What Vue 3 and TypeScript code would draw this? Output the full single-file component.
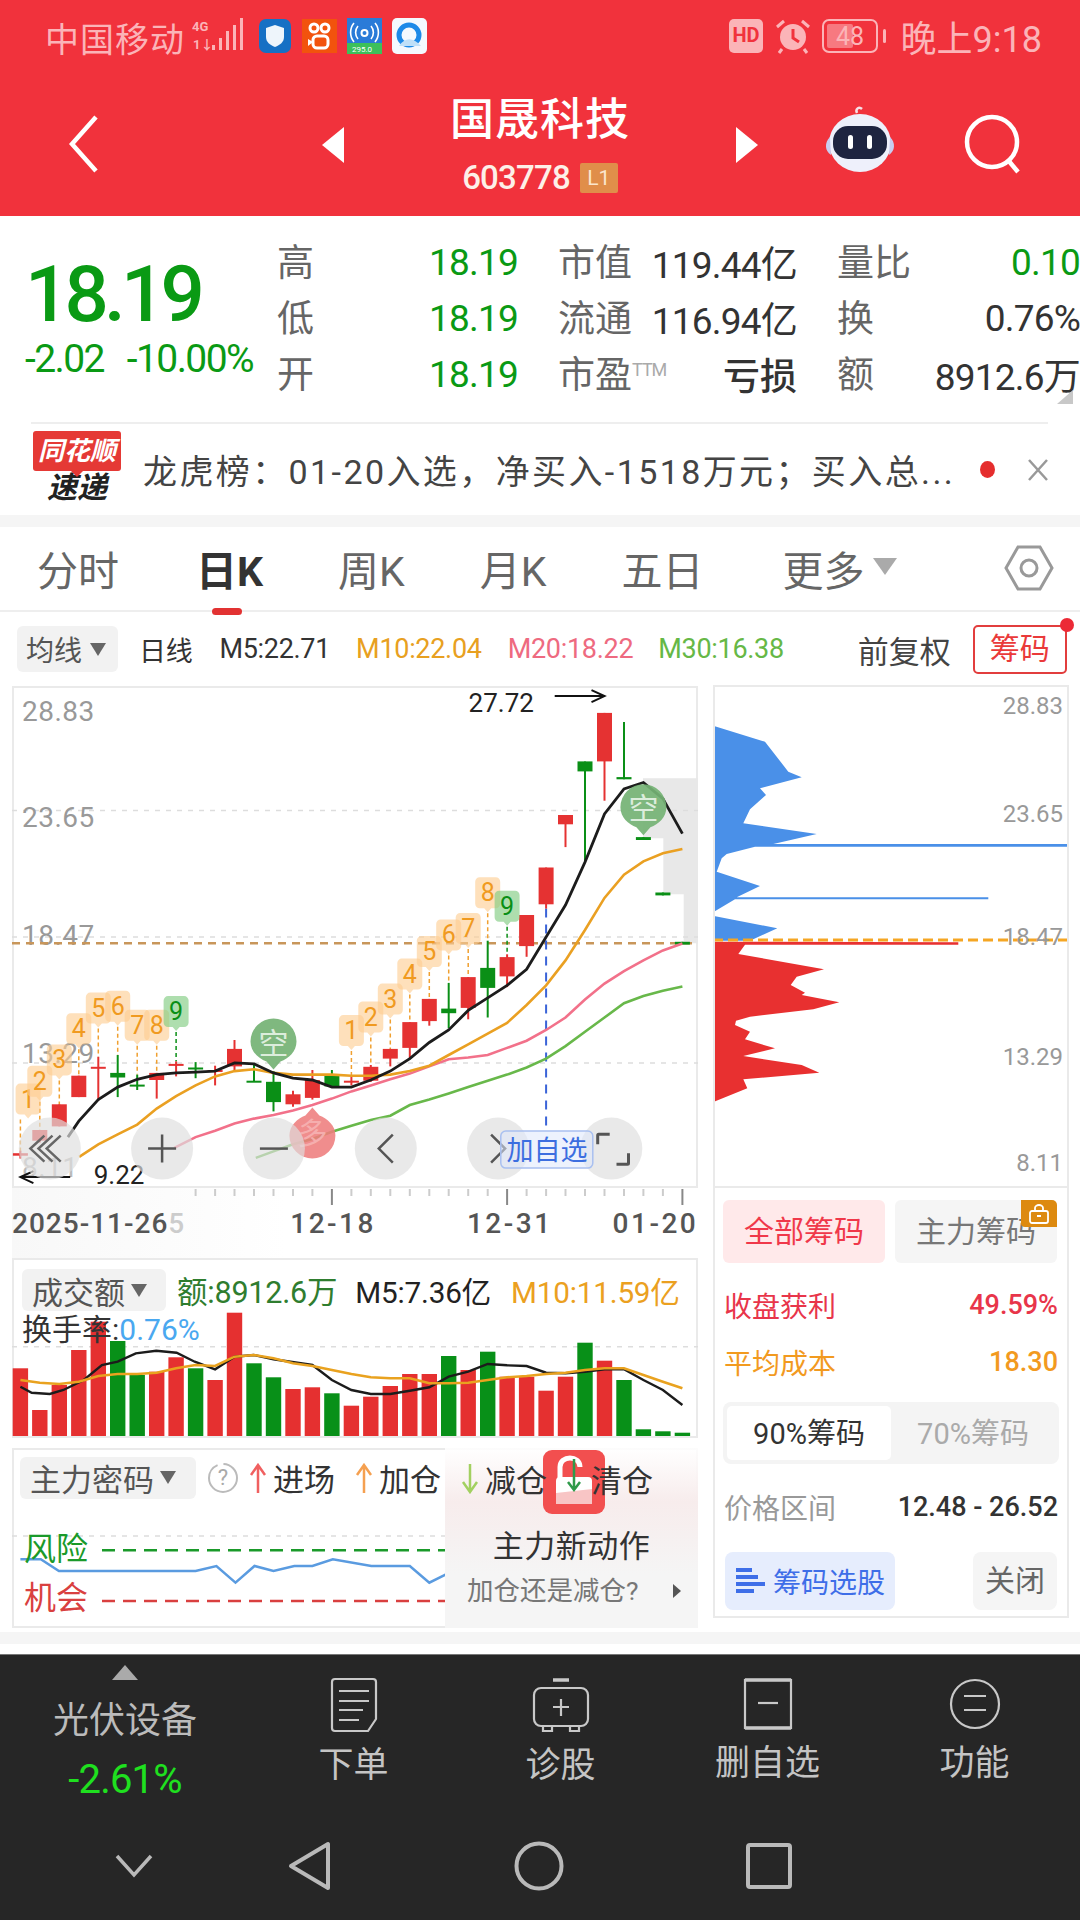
<template>
  <div class="page">
    <header class="top">
      <div class="status">
        <span class="carrier">中国移动</span>
        <svg class="net" width="52" height="36" viewBox="0 0 52 36">
          <text x="0" y="13" class="net-txt">4G</text>
          <text x="1" y="31" class="net-txt">1↓</text>
          <rect x="20" y="27" width="3" height="5" />
          <rect x="27" y="20" width="3" height="12" />
          <rect x="34" y="13" width="3" height="19" />
          <rect x="41" y="7" width="3" height="25" />
          <rect x="48" y="0" width="3" height="32" />
        </svg>
        <svg class="app a0" width="32" height="34" viewBox="0 0 32 34">
          <rect width="32" height="34" rx="7" fill="#1670c4" />
          <path d="M16 6l9 3v9c0 5-4 8-9 10-5-2-9-5-9-10V9z" fill="#eef5fb" />
        </svg>
        <svg class="app a1" width="35" height="34" viewBox="0 0 35 34">
          <rect width="35" height="34" fill="#f2530d" />
          <circle cx="12" cy="9" r="4" fill="none" stroke="#fff" stroke-width="3" />
          <circle cx="23" cy="9" r="4" fill="none" stroke="#fff" stroke-width="3" />
          <rect x="11" y="17" width="15" height="12" rx="4" fill="none" stroke="#fff" stroke-width="3" />
          <path d="M11 23l-5-3v7z" fill="#fff" />
        </svg>
        <svg class="app" width="35" height="36" viewBox="0 0 35 36">
          <rect width="35" height="36" fill="#2a7bd8" />
          <rect y="25" width="35" height="11" fill="#3cc05a" />
          <circle cx="17.500" cy="15" r="3" fill="none" stroke="#fff" stroke-width="2" />
          <path d="M11 8a10 10 0 0 0 0 13M24 8a10 10 0 0 1 0 13M7 5a15 15 0 0 0 0 19M28 5a15 15 0 0 1 0 19" fill="none" stroke="#fff" stroke-width="1.600" />
          <text x="5" y="34" class="tiny">295.0</text>
        </svg>
        <svg class="app" width="35" height="36" viewBox="0 0 35 36">
          <rect width="35" height="36" rx="5" fill="#f4f9fe" />
          <circle cx="17" cy="17" r="10" fill="none" stroke="#1d8ae8" stroke-width="5" />
          <path d="M7 28c6-9 14-9 22 0z" fill="#bfe0f8" />
        </svg>
        <span class="status-fill"></span>
        <svg class="sys" width="34" height="34" viewBox="0 0 34 34">
          <rect width="34" height="34" rx="5" fill="#fbb4b8" />
          <text x="17" y="23" text-anchor="middle" class="hd">HD</text>
        </svg>
        <svg class="sys alarm" width="38" height="36" viewBox="0 0 38 36">
          <circle cx="19" cy="19" r="13" fill="#fbb4b8" />
          <path d="M19 11v9l6 4" fill="none" stroke="#f1323c" stroke-width="3" />
          <path d="M3 9l7-6M35 9l-7-6M8 31l-3 4M30 31l3 4" stroke="#fbb4b8" stroke-width="3" fill="none" />
        </svg>
        <svg class="sys batt" width="66" height="34" viewBox="0 0 66 34">
          <rect x="1" y="1" width="54" height="32" rx="6" fill="none" stroke="#fbb4b8" stroke-width="2" />
          <rect x="5" y="5" width="26" height="24" rx="2" fill="#fbb4b8" fill-opacity=".55" />
          <text x="28" y="26" text-anchor="middle" class="batt-txt">48</text>
          <rect x="61" y="10" width="3" height="14" rx="1.500" fill="#fbb4b8" />
        </svg>
        <span class="clock">晚上9:18</span>
      </div>
      <div class="nav">
        <svg class="back" width="32" height="58" viewBox="0 0 32 58">
          <path d="M28 2L4 29l24 27" fill="none" stroke="#fff" stroke-width="4.500" />
        </svg>
        <svg class="tri-l" width="22" height="36" viewBox="0 0 22 36"><path d="M22 0v36L0 18z" fill="#fff" /></svg>
        <div class="stock">
          <div class="stock-name">国晟科技</div>
          <div class="stock-code">603778<span class="lv">L1</span></div>
        </div>
        <svg class="tri-r" width="22" height="36" viewBox="0 0 22 36"><path d="M0 0v36l22-18z" fill="#fff" /></svg>
        <svg class="robot" width="72" height="68" viewBox="0 0 72 68">
          <path d="M33 8c-2-4 2-7 5-4" fill="none" stroke="#f6dfe6" stroke-width="2.500" />
          <ellipse cx="36" cy="38" rx="31" ry="29" fill="#eef0fb" />
          <path d="M6 32c-6 6-5 14 1 18M66 32c6 6 5 14-1 18" fill="#c9cdf0" />
          <rect x="9" y="21" width="54" height="33" rx="15" fill="#1e2440" />
          <rect x="24" y="30" width="5" height="14" rx="2.500" fill="#fff" />
          <rect x="43" y="30" width="5" height="14" rx="2.500" fill="#fff" />
        </svg>
        <svg class="search" width="60" height="60" viewBox="0 0 60 60">
          <circle cx="28" cy="28" r="25" fill="none" stroke="#fff" stroke-width="4.500" />
          <path d="M44 46l10 12" stroke="#fff" stroke-width="4.500" fill="none" />
        </svg>
      </div>
    </header>

    <section class="quote">
      <div class="price-box">
        <div class="price">18.19</div>
        <div class="change"><span>-2.02</span><span>-10.00%</span></div>
      </div>
      <div class="qgrid">
        <template v-for="row in quoteRows" :key="row[0]">
          <span class="ql">{{ row[0] }}</span>
          <span class="qv green">{{ row[1] }}</span>
          <span class="ql pad" v-if="row[2] !== '市盈'">{{ row[2] }}</span>
          <span class="ql pad" v-else>市盈<sup class="ttm">TTM</sup></span>
          <span class="qv" :class="{ bold: row[3] === '亏损' }">{{ row[3] }}</span>
          <span class="ql pad">{{ row[4] }}</span>
          <span class="qv" :class="{ green: row[4] === '量比' }">{{ row[5] }}</span>
        </template>
      </div>
      <i class="corner"></i>
    </section>

    <section class="news">
      <div class="news-logo">
        <div class="news-red">同花顺</div>
        <div class="news-black">速递</div>
      </div>
      <div class="news-text">龙虎榜：01-20入选，净买入-1518万元；买入总...</div>
      <i class="news-dot"></i>
      <svg class="news-x" width="24" height="24" viewBox="0 0 24 24">
        <path d="M3 2l18 20M21 2L3 22" stroke="#999" stroke-width="2.500" fill="none" />
      </svg>
    </section>

    <div class="gap"></div>

    <nav class="tabs">
      <span class="tab t1">分时</span>
      <span class="tab t2 on">日K</span>
      <span class="tab t3">周K</span>
      <span class="tab t4">月K</span>
      <span class="tab t5">五日</span>
      <span class="tab t6">更多</span>
      <i class="tab-caret"></i>
      <svg class="hex" width="50" height="46" viewBox="0 0 50 46">
        <path d="M14 2h22l12 21-12 21H14L2 23z" fill="none" stroke="#999" stroke-width="3" />
        <circle cx="25" cy="23" r="8" fill="none" stroke="#999" stroke-width="3" />
      </svg>
    </nav>

    <div class="legend">
      <span class="lbtn">均线<i class="caret"></i></span>
      <span class="lg day">日线</span>
      <span class="lg m5">M5:22.71</span>
      <span class="lg m10">M10:22.04</span>
      <span class="lg m20">M20:18.22</span>
      <span class="lg m30">M30:16.38</span>
      <span class="fq">前复权</span>
      <span class="chip-btn">筹码<i class="chip-dot"></i></span>
    </div>

    <main class="main">
      <div class="left-col">
        <div class="kbox">
          <svg width="686" height="502" viewBox="0 0 686 502" class="abs-svg">
            <path :d="greyArea" fill="#e8e8e8" />
            <line v-for="g in gridY" :key="g" x1="0" x2="686" :y1="ky(g)" :y2="ky(g)" class="dot-grid" />
            <text v-for="a in axisL" :key="a.t" x="10" :y="ky(a.y) + 11" class="axis" :class="{ fade: a.t === '8.11' }">{{ a.t }}</text>
            <line x1="0" x2="686" :y1="ky(737)" :y2="ky(737)" stroke="#c8965a" stroke-width="2.500" stroke-dasharray="8 6" />
            <line :x1="kx(1206)" :x2="kx(1206)" :y1="ky(640)" :y2="ky(1262)" stroke="#3a63d8" stroke-width="2" stroke-dasharray="9 7" />

            <g v-for="(s, i) in stems" :key="'s' + i">
              <line :x1="s.x" :x2="s.x" :y1="s.y1" :y2="s.y2" :stroke="s.c" stroke-width="1.500" stroke-dasharray="4 3" />
            </g>

            <g v-for="(c, i) in candles" :key="'c' + i" :fill="c.col" :stroke="c.col">
              <line :x1="c.x" :x2="c.x" :y1="c.wt" :y2="c.wb" stroke-width="2" />
              <rect :x="c.x - 7.500" :y="c.bt" width="15" :height="c.bh" stroke="none" />
            </g>

            <polyline :points="ma20" fill="none" stroke="#f2718a" stroke-width="2.600" />
            <polyline :points="ma30" fill="none" stroke="#68b84a" stroke-width="2.600" />
            <polyline :points="ma10" fill="none" stroke="#eaa022" stroke-width="2.600" />
            <polyline :points="ma5" fill="none" stroke="#1c1c1c" stroke-width="2.800" />

            <g v-for="(b, i) in tags" :key="'t' + i" :transform="`translate(${b.x} ${b.y})`">
              <path d="M-8 -16h16a4.500 4.500 0 0 1 4.500 4.500v22a4.500 4.500 0 0 1-4.500 4.500h-4.500l-3.500 4-3.500-4h-4.500a4.500 4.500 0 0 1-4.500-4.500v-22a4.500 4.500 0 0 1 4.500-4.500z" :fill="b.fill" />
              <text y="8" text-anchor="middle" class="tag-t" :fill="b.tc">{{ b.t }}</text>
            </g>

            <g v-for="(b, i) in bubbles" :key="'b' + i" :transform="`translate(${b.x} ${b.y})`">
              <path d="M-23 -2a23 23 0 1 1 46 0c0 10-8 17-16 20l-7 8-7-8c-8-3-16-10-16-20z" :fill="b.fill" :opacity="b.op" :transform="b.flip ? 'scale(1 -1)' : undefined" />
              <text y="10" text-anchor="middle" class="bub-t" :class="{ dim: b.flip }">{{ b.t }}</text>
            </g>

            <text :x="kx(1035)" :y="ky(65) + 9" class="mark">27.72</text>
            <path :d="`M${kx(1225)} ${ky(45)}H${kx(1335)}m-13 -6l13 6-13 6`" fill="none" stroke="#111" stroke-width="2" />
            <text :x="kx(207)" :y="ky(1395) + 6" class="mark">9.22</text>
            <path :d="`M${kx(155)} ${ky(1392)}H${kx(45)}m13 -6l-13 6 13 6`" fill="none" stroke="#111" stroke-width="2" />

            <g v-for="x in btnX" :key="x">
              <circle :cx="kx(x)" :cy="ky(1312)" r="31" fill="#dedede" fill-opacity=".68" />
            </g>
            <g fill="none" stroke="#555" stroke-width="2.500">
              <path :d="`M${kx(98)} ${ky(1312) - 13}l-14 13 14 13M${kx(116)} ${ky(1312) - 13}l-14 13 14 13M${kx(134)} ${ky(1312) - 13}l-14 13 14 13`" stroke="#666" />
              <path :d="`M${kx(358) - 14} ${ky(1312)}h28M${kx(358)} ${ky(1312) - 14}v28`" />
              <path :d="`M${kx(605) - 14} ${ky(1312)}h28`" />
              <path :d="`M${kx(852) + 7} ${ky(1312) - 14}l-14 14 14 14`" />
              <path :d="`M${kx(1100) - 7} ${ky(1312) - 14}l14 14-14 14`" />
              <path :d="`M${kx(1320)} ${ky(1300)}v-9a1 1 0 0 1 1-1h11M${kx(1388)} ${ky(1325)}v10a1 1 0 0 1-1 1h-11`" stroke-width="3" />
            </g>
            <rect :x="kx(1106)" :y="ky(1263)" width="92" height="37" rx="5" fill="#dfe8fb" fill-opacity=".55" stroke="#a9c0f0" stroke-width="1.500" />
            <text :x="kx(1208)" :y="ky(1315) + 10" text-anchor="middle" class="add-t">加自选</text>
          </svg>
        </div>
        <div class="dates">
          <svg class="ticks" width="686" height="18" viewBox="0 0 686 18">
            <line v-for="t in ticks" :key="t.x" :x1="t.x" :x2="t.x" y1="1" :y2="t.big ? 17 : 8" :stroke="t.big ? '#888' : '#ccc'" stroke-width="2" />
          </svg>
          <div class="date-row">
            <span class="date d1">2025-11-26<em>5</em></span>
            <span class="date d2">12-18</span>
            <span class="date d3">12-31</span>
            <span class="date d4">01-20</span>
          </div>
        </div>
        <div class="vol">
          <svg width="686" height="178" viewBox="0 0 686 178" class="abs-svg shift">
            <line x1="0" x2="686" :y1="vy(320)" :y2="vy(320)" class="dot-grid" />
            <rect v-for="(b, i) in bars" :key="i" :x="b.x - 7.700" :y="b.y" width="15.400" :height="b.h" :fill="b.col" />
            <polyline :points="volBlack" fill="none" stroke="#1c1c1c" stroke-width="2.400" />
            <polyline :points="volOrange" fill="none" stroke="#e9a21f" stroke-width="2.600" />
          </svg>
          <div class="vol-head">
            <span class="lbtn wide">成交额<i class="caret"></i></span>
            <span class="vt vg">额:8912.6万</span>
            <span class="vt vk">M5:7.36亿</span>
            <span class="vt vo">M10:11.59亿</span>
          </div>
          <div class="turn">换手率:<b>0.76%</b></div>
        </div>
        <div class="code">
          <svg width="686" height="178" viewBox="0 0 686 178" class="abs-svg shift">
            <line x1="0" x2="686" :y1="my(885)" :y2="my(885)" class="dot-grid" />
            <line x1="90" x2="440" :y1="my(928)" :y2="my(928)" stroke="#1a9a2a" stroke-width="2.500" stroke-dasharray="13 8" />
            <line x1="90" x2="440" :y1="my(1080)" :y2="my(1080)" stroke="#d94040" stroke-width="2.500" stroke-dasharray="13 8" />
            <polyline :points="riskLine" fill="none" stroke="#5a9be0" stroke-width="2.500" />
          </svg>
          <div class="code-head">
            <span class="lbtn big">主力密码<i class="caret"></i></span>
            <svg class="help" width="32" height="32" viewBox="0 0 32 32">
              <circle cx="16" cy="16" r="14" fill="none" stroke="#bbb" stroke-width="2" stroke-dasharray="60 6" />
              <text x="16" y="23" text-anchor="middle" class="help-t">?</text>
            </svg>
            <svg class="arr" width="18" height="30" viewBox="0 0 18 30"><path d="M9 30V3M2 12l7-10 7 10" fill="none" stroke="#f06060" stroke-width="2.500" /></svg>
            <span class="ct">进场</span>
            <svg class="arr a2" width="18" height="30" viewBox="0 0 18 30"><path d="M9 30V3M2 12l7-10 7 10" fill="none" stroke="#f5a050" stroke-width="2.500" /></svg>
            <span class="ct">加仓</span>
          </div>
          <div class="code-side"><span class="risk">风险</span><span class="chance">机会</span></div>
          <div class="popup">
            <div class="pop-top">
              <svg class="arr" width="18" height="30" viewBox="0 0 18 30"><path d="M9 0v27M2 18l7 10 7-10" fill="none" stroke="#a2d060" stroke-width="2.500" /></svg>
              <span class="ct">减仓</span>
              <span class="pop-icon">
                <svg width="62" height="64" viewBox="0 0 62 64">
                  <rect width="62" height="64" rx="9" fill="#f24f4f" />
                  <path d="M17 28V17c0-12 20-12 20 0" fill="none" stroke="#fff" stroke-width="5" />
                  <rect x="13" y="27" width="36" height="27" rx="4" fill="#fff" />
                  <path d="M13 43l36-4v15H13z" fill="#f8c5c5" />
                  <path d="M31 9v30M25 32l6 8 6-8" fill="none" stroke="#2f9a4a" stroke-width="2.500" />
                </svg>
              </span>
              <span class="ct">清仓</span>
            </div>
            <div class="pop-title">主力新动作</div>
            <div class="pop-sub">加仓还是减仓?<i class="pop-arrow"></i></div>
          </div>
        </div>
      </div>

      <div class="right-col">
        <svg width="356" height="503" viewBox="0 0 356 503" class="chips">
          <path :d="blueA" fill="#4a90e8" />
          <path :d="blueB" fill="#4a90e8" />
          <path :d="redA" fill="#e83030" />
          <line x1="1" x2="1" y1="432" y2="488" stroke="#e85050" stroke-width="2" stroke-dasharray="6 5" />
          <line x1="0" x2="356" :y1="rpy(780)" :y2="rpy(780)" stroke="#f5a623" stroke-width="3" stroke-dasharray="10 5" />
          <text v-for="a in axisR" :key="a.t" x="350" :y="rpy(a.y) + 8" text-anchor="end" class="raxis">{{ a.t }}</text>
        </svg>
        <div class="chip-panel">
          <div class="chip-tabs">
            <span class="ctab active">全部筹码</span>
            <span class="ctab">主力筹码
              <i class="lock">
                <svg width="22" height="20" viewBox="0 0 22 20">
                  <rect x="2" y="7" width="18" height="12" rx="2" fill="none" stroke="#fff" stroke-width="1.800" />
                  <path d="M7 7V4a4 3 0 0 1 8 0v3M9 12h4" fill="none" stroke="#fff" stroke-width="1.800" />
                </svg>
              </i>
            </span>
          </div>
          <div class="stat red"><span>收盘获利</span><b>49.59%</b></div>
          <div class="stat orange"><span>平均成本</span><b>18.30</b></div>
          <div class="seg"><span class="seg-on">90%筹码</span><span class="seg-off">70%筹码</span></div>
          <div class="range"><span>价格区间</span><b>12.48 - 26.52</b></div>
          <div class="chip-foot">
            <span class="pick">
              <svg width="30" height="28" viewBox="0 0 30 28">
                <path d="M1 3h16M1 10h22M1 17h29M1 24h18" stroke="#3e6ee8" stroke-width="4" />
              </svg>
              筹码选股
            </span>
            <span class="close">关闭</span>
          </div>
        </div>
      </div>
    </main>

    <div class="sep"></div>

    <footer class="dock">
      <div class="dock-items">
        <div class="sector">
          <i class="sec-up"></i>
          <div class="sec-name">光伏设备</div>
          <div class="sec-pct">-2.61%</div>
        </div>
        <div class="dock-item">
          <svg width="48" height="56" viewBox="0 0 48 56" class="dk">
            <path d="M5 2h38a3 3 0 0 1 3 3v37l-8 12H5a3 3 0 0 1-3-3V5a3 3 0 0 1 3-3z" />
            <path d="M9 14h30M9 24h30M9 33h24M9 43h20" />
          </svg>
          <span>下单</span>
        </div>
        <div class="dock-item">
          <svg width="58" height="56" viewBox="0 0 58 56" class="dk">
            <path d="M21 3h16" stroke-width="3.500" />
            <rect x="2" y="11" width="54" height="38" rx="7" />
            <path d="M29 22v17M21 30h16M11 49v5h9v-5M38 49v5h9v-5" />
          </svg>
          <span>诊股</span>
        </div>
        <div class="dock-item">
          <svg width="50" height="54" viewBox="0 0 50 54" class="dk">
            <rect x="2" y="3" width="46" height="48" />
            <path d="M2 3h46M2 51h46" stroke-width="3.500" />
            <path d="M15 26h20" />
          </svg>
          <span>删自选</span>
        </div>
        <div class="dock-item">
          <svg width="52" height="54" viewBox="0 0 52 54" class="dk">
            <circle cx="26" cy="27" r="24" />
            <path d="M15 19h22M15 33h22" />
          </svg>
          <span>功能</span>
        </div>
      </div>
      <div class="sysnav">
        <svg class="sn1" width="40" height="24" viewBox="0 0 40 24"><path d="M3 2l17 19L37 2" fill="none" stroke="#b9b9b9" stroke-width="3.500" /></svg>
        <svg class="sn2" width="44" height="50" viewBox="0 0 44 50"><path d="M40 3v44L3 25z" fill="none" stroke="#b9b9b9" stroke-width="4" stroke-linejoin="round" /></svg>
        <svg class="sn3" width="50" height="50" viewBox="0 0 50 50"><circle cx="25" cy="25" r="22.500" fill="none" stroke="#b9b9b9" stroke-width="4" /></svg>
        <svg class="sn4" width="46" height="46" viewBox="0 0 46 46"><rect x="2" y="2" width="42" height="42" rx="2" fill="none" stroke="#b9b9b9" stroke-width="4" /></svg>
      </div>
    </footer>
  </div>
</template>

<script setup lang="ts">
const quoteRows = [
  ['高', '18.19', '市值', '119.44亿', '量比', '0.10'],
  ['低', '18.19', '流通', '116.94亿', '换', '0.76%'],
  ['开', '18.19', '市盈', '亏损', '额', '8912.6万'],
]

// chart points were read off a zoomed crop, these map them to svg units
const kx = (x: number) => +(x / 2.2085 - 12).toFixed(1)
const ky = (y: number) => +(680 + y / 2.8 - 686).toFixed(1)
const vy = (y: number) => +(1240 + y / 3 - 1258).toFixed(1)
const my = (y: number) => +(1240 + y / 3 - 1447).toFixed(1)
const rpx = (x: number) => +(x / 3 - 13).toFixed(1)
const rpy = (y: number) => +(y / 3 - 5).toFixed(1)
const barX = (i: number) => 45 + 43 * i

const RED = '#e53232'
const GREEN = '#0a8f16'

const gridY = [365, 720, 1072]
const axisL = [
  { t: '28.83', y: 85 },
  { t: '23.65', y: 380 },
  { t: '18.47', y: 710 },
  { t: '13.29', y: 1042 },
  { t: '8.11', y: 1360 },
]
const axisR = [
  { t: '28.83', y: 78 },
  { t: '23.65', y: 403 },
  { t: '18.47', y: 770 },
  { t: '13.29', y: 1132 },
  { t: '8.11', y: 1450 },
]

const greyArea = `M${kx(1420)} ${ky(275)}H686V${ky(737)}H${kx(1510)}V${ky(600)}H${kx(1465)}V${ky(443)}H${kx(1420)}z`

const rawCandles: [number, number, number, number, string][] = [
  [1325, 1332, 1318, 1340, RED],
  [1260, 1290, 1260, 1295, RED],
  [1188, 1250, 1188, 1250, RED],
  [1108, 1168, 1108, 1168, RED],
  [1083, 1088, 1055, 1178, RED],
  [1100, 1113, 1050, 1168, GREEN],
  [1133, 1138, 1105, 1148, GREEN],
  [1100, 1120, 1100, 1172, RED],
  [1075, 1080, 1068, 1110, RED],
  [1085, 1089, 1070, 1115, GREEN],
  [1092, 1096, 1080, 1135, RED],
  [1033, 1082, 1008, 1095, RED],
  [1122, 1126, 1075, 1126, GREEN],
  [1125, 1182, 1095, 1208, GREEN],
  [1160, 1188, 1150, 1195, RED],
  [1120, 1170, 1092, 1175, RED],
  [1108, 1138, 1092, 1140, GREEN],
  [1122, 1127, 1110, 1135, RED],
  [1083, 1122, 1078, 1125, RED],
  [1033, 1060, 1033, 1082, RED],
  [958, 1030, 958, 1060, RED],
  [893, 955, 893, 968, RED],
  [920, 933, 848, 975, GREEN],
  [832, 918, 832, 950, RED],
  [806, 862, 730, 945, GREEN],
  [776, 830, 768, 860, RED],
  [658, 745, 658, 775, RED],
  [525, 628, 525, 640, RED],
  [378, 404, 378, 468, RED],
  [228, 256, 228, 510, GREEN],
  [92, 228, 92, 338, RED],
  [272, 278, 118, 278, GREEN],
  [440, 448, 440, 448, GREEN],
  [595, 603, 595, 603, GREEN],
  [733, 741, 733, 741, GREEN],
]
const candles = rawCandles.map((c, i) => ({
  x: kx(barX(i)),
  bt: ky(c[0]),
  bh: Math.max(+(ky(c[1]) - ky(c[0])).toFixed(1), 2),
  wt: ky(c[2]),
  wb: ky(c[3]),
  col: c[4],
}))

function pts(list: number[][], fx: (n: number) => number, fy: (n: number) => number) {
  return list.map((p) => `${fx(p[0])},${fy(p[1])}`).join(' ')
}

const ma5 = pts([[150, 1280], [174, 1235], [217, 1175], [260, 1140], [303, 1118], [346, 1105], [389, 1100], [432, 1098], [475, 1095], [518, 1072], [561, 1075], [604, 1100], [647, 1115], [690, 1120], [733, 1140], [776, 1140], [819, 1120], [862, 1095], [905, 1060], [948, 1015], [991, 980], [1034, 925], [1077, 890], [1120, 855], [1163, 810], [1206, 720], [1249, 630], [1292, 510], [1335, 375], [1378, 305], [1421, 287], [1464, 332], [1507, 430]], kx, ky)
const ma10 = pts([[175, 1335], [217, 1300], [260, 1272], [303, 1245], [346, 1200], [389, 1165], [432, 1135], [475, 1110], [518, 1095], [561, 1090], [604, 1100], [647, 1105], [690, 1105], [733, 1105], [776, 1108], [819, 1108], [862, 1105], [905, 1095], [948, 1080], [991, 1050], [1034, 1020], [1077, 990], [1120, 960], [1163, 910], [1206, 855], [1249, 785], [1292, 700], [1335, 610], [1378, 545], [1421, 508], [1464, 485], [1507, 473]], kx, ky)
const ma20 = pts([[385, 1310], [432, 1280], [475, 1262], [518, 1242], [561, 1228], [604, 1218], [647, 1205], [690, 1190], [733, 1172], [776, 1152], [819, 1135], [862, 1118], [905, 1102], [948, 1082], [991, 1062], [1034, 1057], [1077, 1050], [1120, 1030], [1163, 1010], [1206, 980], [1249, 945], [1292, 895], [1335, 850], [1378, 815], [1421, 785], [1464, 757], [1507, 738]], kx, ky)
const ma30 = pts([[565, 1338], [604, 1320], [647, 1300], [690, 1285], [733, 1265], [776, 1248], [819, 1232], [862, 1220], [905, 1190], [948, 1175], [991, 1158], [1034, 1140], [1077, 1122], [1120, 1105], [1163, 1085], [1206, 1060], [1249, 1025], [1292, 985], [1335, 945], [1378, 905], [1421, 885], [1464, 870], [1507, 858]], kx, ky)

const ORANGE_TAG = 'rgba(253, 205, 145, 0.62)'
const GREEN_TAG = 'rgba(130, 205, 130, 0.65)'
const rawTags: [number, number, string, number][] = [
  [62, 1175, '1', 1325], [88, 1125, '2', 1260], [131, 1065, '3', 1188], [174, 978, '4', 1108],
  [217, 920, '5', 1055], [260, 915, '6', 1050], [303, 968, '7', 1105], [346, 968, '8', 1100],
  [389, 930, '9', 1068], [776, 983, '1', 1110], [819, 945, '2', 1078], [862, 895, '3', 1033],
  [905, 825, '4', 958], [948, 762, '5', 893], [991, 715, '6', 848], [1034, 697, '7', 832],
  [1077, 597, '8', 730], [1120, 635, '9', 768],
]
const tags = rawTags.map((t) => ({
  x: kx(t[0]),
  y: ky(t[1]),
  t: t[2],
  fill: t[2] === '9' ? GREEN_TAG : ORANGE_TAG,
  tc: t[2] === '9' ? '#0a8f16' : '#f09a20',
}))
const stems = rawTags.map((t) => ({
  x: kx(t[0] === 62 ? 45 : t[0]),
  y1: ky(t[1]) + 20,
  y2: ky(t[3]),
  c: t[2] === '9' ? '#0a8f16' : '#f0a030',
}))

const bubbles = [
  { x: kx(604), y: ky(1018), t: '空', fill: '#74b274', op: 0.92, flip: false },
  { x: kx(1421), y: ky(362), t: '空', fill: '#74b274', op: 0.92, flip: false },
  { x: kx(690), y: ky(1270), t: '多', fill: '#ee7d7d', op: 0.88, flip: true },
]

const btnX = [110, 358, 605, 852, 1100, 1350]

const ticks = Array.from({ length: 26 }, (_, i) => {
  const z = 432 + 43 * i
  return { x: kx(z), big: z === 733 || z === 1120 || z === 1507 }
})

const barTops = [385, 510, 435, 330, 245, 303, 405, 395, 352, 385, 420, 218, 370, 412, 447, 442, 460, 497, 470, 438, 402, 402, 348, 390, 335, 410, 410, 452, 410, 308, 362, 420, 568, 574, 578]
const greenIdx = [5, 6, 9, 12, 13, 16, 22, 24, 29, 31, 32, 33, 34]
const bars = barTops.map((t, i) => ({
  x: kx(barX(i)),
  y: vy(t),
  h: +(vy(590) - vy(t)).toFixed(1),
  col: greenIdx.includes(i) ? '#089018' : '#e53030',
}))
const volBlack = pts([[45, 440], [70, 458], [110, 462], [140, 450], [185, 420], [225, 375], [260, 365], [300, 340], [345, 332], [390, 338], [430, 365], [475, 388], [518, 350], [560, 345], [604, 358], [690, 375], [733, 420], [776, 450], [819, 462], [862, 462], [905, 452], [948, 442], [991, 410], [1034, 395], [1077, 372], [1120, 376], [1163, 378], [1206, 398], [1249, 400], [1292, 395], [1335, 388], [1378, 388], [1421, 420], [1464, 450], [1507, 495]], kx, vy)
const volOrange = pts([[45, 420], [88, 428], [131, 432], [174, 425], [217, 408], [260, 402], [303, 402], [346, 398], [389, 385], [432, 375], [475, 378], [518, 350], [561, 345], [604, 355], [647, 370], [690, 378], [733, 390], [776, 402], [819, 412], [862, 415], [905, 415], [948, 430], [991, 430], [1034, 428], [1077, 420], [1120, 412], [1163, 408], [1206, 402], [1249, 398], [1292, 390], [1335, 385], [1378, 385], [1421, 405], [1464, 425], [1507, 445]], kx, vy)
const riskLine = pts([[45, 955], [90, 955], [130, 990], [432, 990], [478, 975], [520, 1025], [562, 975], [604, 990], [650, 975], [690, 975], [735, 955], [820, 975], [905, 975], [948, 1025], [985, 1000]], kx, my)

function poly(list: number[][]) {
  return 'M' + list.map((p) => `${rpx(p[0])} ${rpy(p[1])}`).join('L') + 'z'
}
const blueA = poly([[42, 138], [195, 185], [265, 275], [305, 292], [180, 325], [198, 345], [150, 388], [130, 430], [350, 462], [220, 492], [1105, 492], [1105, 500], [165, 500], [80, 522], [65, 535], [50, 575], [180, 618], [110, 652], [865, 652], [865, 658], [105, 658], [42, 695]])
const blueB = poly([[42, 708], [232, 745], [150, 782], [42, 782]])
const redA = poly([[42, 785], [775, 787], [775, 794], [135, 794], [115, 822], [372, 868], [290, 890], [272, 915], [315, 938], [305, 945], [418, 967], [340, 988], [150, 1010], [108, 1022], [105, 1035], [150, 1055], [135, 1078], [225, 1105], [130, 1128], [305, 1155], [358, 1178], [130, 1198], [142, 1225], [42, 1265]])
</script>

<style scoped>
.page {
  width: 1080px;
  height: 1920px;
  overflow: hidden;
  display: flex;
  flex-direction: column;
  background: #fff;
  color: #333;
  font-family: Roboto, "Noto Sans CJK SC", sans-serif;
}

/* header */
.top {
  height: 216px;
  background: #f1323c;
  flex: none;
}
.status {
  height: 72px;
  display: flex;
  align-items: center;
  padding: 0 38px 0 45px;
  color: #fbb4b8;
}
.carrier {
  font-size: 34px;
  letter-spacing: 1px;
  margin-top: 2px;
}
.net {
  margin-left: 7px;
  fill: #fbb4b8;
}
.net-txt {
  font-size: 13px;
  font-weight: 700;
  fill: #fbb4b8;
}
.app {
  margin-left: 10px;
}
.a0 {
  margin-left: 15px;
}
.a1 {
  margin-left: 11px;
}
.tiny {
  font-size: 8px;
  fill: #fff;
}
.status-fill {
  flex: 1;
}
.hd {
  font-size: 20px;
  font-weight: 700;
  fill: #f1323c;
}
.sys {
  flex: none;
}
.alarm {
  margin-left: 11px;
}
.batt {
  margin-left: 10px;
}
.batt-txt {
  font-size: 25px;
  fill: #fbb4b8;
}
.clock {
  font-size: 36px;
  margin-left: 13px;
}
.nav {
  height: 144px;
  display: flex;
  align-items: flex-start;
  padding-left: 68px;
}
.back {
  margin-top: 43px;
}
.tri-l {
  margin: 55px 0 0 222px;
}
.stock {
  width: 392px;
  text-align: center;
  color: #fff;
}
.stock-name {
  margin-top: 20px;
  font-size: 44px;
  line-height: 56px;
  letter-spacing: 1px;
  font-weight: 500;
}
.stock-code {
  margin-top: 12px;
  font-size: 33px;
  font-weight: 500;
  line-height: 36px;
  letter-spacing: -0.8px;
  display: flex;
  justify-content: center;
  align-items: center;
  color: #fdf0e8;
}
.lv {
  width: 38px;
  height: 30px;
  margin-left: 10px;
  background: #e08e4a;
  border-radius: 2px;
  font-size: 21px;
  font-weight: 400;
  line-height: 30px;
  color: #fbe6cd;
  letter-spacing: 0;
}
.tri-r {
  margin-top: 55px;
}
.robot {
  margin: 33px 0 0 66px;
}
.search {
  margin: 42px 0 0 68px;
}

/* quote */
.quote {
  height: 206px;
  flex: none;
  display: flex;
  position: relative;
  padding-top: 18px;
  box-sizing: border-box;
}
.price-box {
  width: 277px;
  padding-left: 25px;
  box-sizing: border-box;
  color: #0a9a14;
}
.price {
  font-size: 78px;
  font-weight: 500;
  line-height: 80px;
  letter-spacing: -4.800px;
  margin-top: 21px;
}
.change {
  display: flex;
  margin: 4px 0 0 0;
  font-size: 39px;
  line-height: 40px;
  letter-spacing: -1.600px;
  gap: 23px;
  white-space: nowrap;
}
.qgrid {
  display: grid;
  grid-template-columns: 37px 204px 115px 164px 115px 168px;
  grid-auto-rows: 56px;
  align-items: center;
  white-space: nowrap;
}
.ql {
  font-size: 37px;
  color: #666;
  margin-bottom: 4px;
}
.pad {
  padding-left: 40px;
}
.qv {
  font-size: 37px;
  color: #333;
  text-align: right;
  letter-spacing: -0.8px;
}
.qv.green {
  color: #0a9a14;
}
.qv.bold {
  font-weight: 500;
  font-size: 37px;
  letter-spacing: 0;
}
.ttm {
  font-size: 18px;
  color: #aaa;
  vertical-align: 12px;
  line-height: 0;
  letter-spacing: -1px;
}
.corner {
  position: absolute;
  right: 7px;
  top: 174px;
  width: 0;
  height: 0;
  border-style: solid;
  border-width: 0 0 14px 16px;
  border-color: transparent transparent #c8c8c8 transparent;
}

/* news */
.news {
  height: 93px;
  margin: 0 32px 0 31px;
  border-top: 2px solid #eee;
  box-sizing: border-box;
  flex: none;
  display: flex;
  align-items: center;
}
.news-logo {
  width: 88px;
  margin: -4px 0 0 2px;
  text-align: center;
  font-style: italic;
  font-weight: 700;
}
.news-red {
  position: relative;
  background: #e53935;
  color: #fff;
  font-size: 26px;
  line-height: 40px;
  border-radius: 3px;
}
.news-red::after {
  content: "";
  position: absolute;
  left: 38px;
  bottom: -6px;
  border-style: solid;
  border-width: 6px 6px 0 6px;
  border-color: #e53935 transparent transparent transparent;
}
.news-black {
  color: #222;
  font-size: 30px;
  line-height: 33px;
}
.news-text {
  margin-left: 22px;
  width: 830px;
  font-size: 34px;
  color: #444;
  letter-spacing: 2.400px;
  white-space: nowrap;
}
.news-dot {
  position: absolute;
  left: 980px;
  width: 15px;
  height: 17px;
  border-radius: 50%;
  background: #e52d2d;
}
.news-x {
  position: absolute;
  left: 1026px;
}

.gap {
  height: 12px;
  flex: none;
  background: #f5f5f5;
}

/* tabs */
.tabs {
  height: 85px;
  flex: none;
  border-bottom: 2px solid #eee;
  box-sizing: border-box;
  display: flex;
  align-items: center;
  padding: 0 0 2px 37px;
  font-size: 41px;
  color: #666;
}
.tab {
  position: relative;
  white-space: nowrap;
}
.t2 {
  margin-left: 77px;
}
.t3 {
  margin-left: 75px;
}
.t4 {
  margin-left: 75px;
}
.t5 {
  margin-left: 75px;
}
.t6 {
  margin-left: 79px;
}
.on {
  color: #333;
  font-weight: 700;
}
.on::after {
  content: "";
  position: absolute;
  left: 16px;
  bottom: -17px;
  width: 30px;
  height: 7px;
  border-radius: 4px;
  background: #e23232;
}
.tab-caret {
  margin: 0 0 2px 8px;
  border-style: solid;
  border-width: 17px 12px 0 12px;
  border-color: #aaa transparent transparent transparent;
}
.hex {
  margin-left: 107px;
}

/* legend */
.legend {
  height: 74px;
  flex: none;
  display: flex;
  align-items: center;
  padding: 0 0 0 17px;
  margin-bottom: 0;
  white-space: nowrap;
}
.lbtn {
  display: inline-flex;
  align-items: center;
  height: 46px;
  width: 101px;
  box-sizing: border-box;
  padding-left: 9px;
  border-radius: 6px;
  background: #f2f2f2;
  font-size: 28px;
  color: #555;
}
.caret {
  margin-left: 8px;
  border-style: solid;
  border-width: 13px 8px 0 8px;
  border-color: #666 transparent transparent transparent;
}
.lg {
  font-size: 27px;
  letter-spacing: -0.3px;
}
.day {
  margin-left: 21px;
  color: #333;
}
.m5 {
  margin-left: 27px;
  color: #333;
}
.m10 {
  margin-left: 26px;
  color: #e8a020;
}
.m20 {
  margin-left: 26px;
  color: #ee6a80;
}
.m30 {
  margin-left: 25px;
  color: #66b846;
}
.fq {
  margin-left: 74px;
  font-size: 31px;
  color: #444;
}
.chip-btn {
  position: relative;
  margin-left: 22px;
  width: 94px;
  height: 49px;
  box-sizing: border-box;
  border: 2px solid #e23d3d;
  border-radius: 5px;
  color: #ea3a3a;
  font-size: 30px;
  line-height: 44px;
  text-align: center;
}
.chip-dot {
  position: absolute;
  right: -9px;
  top: -9px;
  width: 14px;
  height: 14px;
  border-radius: 50%;
  background: #ec2a36;
}

/* charts */
.main {
  display: flex;
  flex: none;
  gap: 15px;
  padding-left: 12px;
  height: 946px;
}
.left-col {
  width: 686px;
  flex: none;
}
.kbox {
  width: 686px;
  height: 502px;
  box-sizing: border-box;
  outline: 2px solid #eaeaea;
  outline-offset: -2px;
  position: relative;
  overflow: hidden;
}
.abs-svg {
  position: absolute;
  left: 0;
  top: 0;
}
.abs-svg.shift {
  left: -2px;
  top: -2px;
}
.dot-grid {
  stroke: #ddd;
  stroke-width: 1.500;
  stroke-dasharray: 5 6;
}
.axis {
  font-size: 28px;
  letter-spacing: 0.5px;
  fill: #999;
}
.axis.fade {
  fill: #bbb;
}
.mark {
  font-size: 26px;
  fill: #222;
}
.tag-t {
  font-size: 25px;
}
.bub-t {
  font-size: 30px;
  fill: #eef7ee;
  fill-opacity: 0.85;
}
.bub-t.dim {
  fill: #f6b5b5;
}
.add-t {
  font-size: 27px;
  fill: #3c6ee0;
}
.dates {
  height: 70px;
  overflow: hidden;
  position: relative;
  background: linear-gradient(90deg, #f8f8f8, #fff 40%);
}
.ticks {
  display: block;
}
.date-row {
  display: flex;
  font-size: 28px;
  color: #555;
  letter-spacing: 2.500px;
  font-weight: 500;
  line-height: 36px;
  margin-top: 0;
  white-space: nowrap;
}
.date {
  flex: none;
}
.date em {
  font-style: normal;
  color: #ccc;
}
.d1 {
  letter-spacing: 1px;
}
.d2 {
  margin-left: 105px;
}
.d3 {
  margin-left: 91px;
}
.d4 {
  margin-left: 60px;
}
.vol,
.code {
  position: relative;
  width: 686px;
  height: 180px;
  border: 2px solid #eaeaea;
  box-sizing: border-box;
}
.code {
  margin-top: 10px;
}
.vol-head {
  position: relative;
  display: flex;
  align-items: center;
  padding: 8px 0 0 8px;
  white-space: nowrap;
}
.lbtn.wide {
  width: 144px;
  padding-left: 10px;
  height: 42px;
  font-size: 31px;
}
.lbtn.big {
  width: 176px;
  padding-left: 10px;
  height: 42px;
  font-size: 31px;
}
.lbtn.wide .caret,
.lbtn.big .caret {
  margin-left: 6px;
}
.vt {
  font-size: 30.500px;
  letter-spacing: -0.2px;
}
.vg {
  margin-left: 11px;
  color: #2f7d2f;
}
.vk {
  margin-left: 18px;
  font-size: 29.700px;
  color: #222;
}
.vo {
  margin-left: 20px;
  font-size: 29.700px;
  color: #eba020;
}
.turn {
  position: relative;
  margin-left: 8px;
  font-size: 30px;
  line-height: 36px;
  color: #333;
  white-space: nowrap;
}
.turn b {
  font-weight: 400;
  color: #4aa8f0;
}
.code-head {
  position: relative;
  display: flex;
  align-items: center;
  padding: 5px 0 0 6px;
  white-space: nowrap;
}
.help {
  margin-left: 11px;
}
.help-t {
  font-size: 22px;
  fill: #aaa;
}
.arr {
  margin-left: 10px;
  flex: none;
}
.a2 {
  margin-left: 20px;
}
.ct {
  margin-left: 6px;
  font-size: 31px;
  color: #333;
}
.code-side {
  position: absolute;
  left: 10px;
  top: 75px;
  display: flex;
  flex-direction: column;
  font-size: 32px;
  line-height: 49px;
}
.risk {
  color: #1a9a2a;
}
.chance {
  color: #d94040;
}
.popup {
  position: absolute;
  right: -2px;
  top: -2px;
  width: 253px;
  height: 180px;
  background: linear-gradient(180deg, rgba(255, 255, 255, 0.85), #f7ecec 30%, #f5f5f5 70%);
  text-align: center;
}
.pop-top {
  display: flex;
  align-items: center;
  height: 56px;
  padding: 5px 0 0 12px;
  box-sizing: border-box;
  position: relative;
  white-space: nowrap;
}
.pop-top .arr {
  margin-left: 4px;
}
.pop-icon {
  width: 62px;
  height: 64px;
  margin: 6px -20px 0 -4px;
  position: relative;
  z-index: 0;
}
.pop-top .ct {
  position: relative;
  z-index: 1;
}
.pop-title {
  margin-top: 23px;
  font-size: 31px;
  line-height: 40px;
  color: #333;
  letter-spacing: 0.5px;
}
.pop-sub {
  margin-top: 6px;
  font-size: 26.500px;
  line-height: 36px;
  color: #777;
  padding-right: 14px;
  text-align: left;
  padding-left: 22px;
  white-space: nowrap;
  position: relative;
}
.pop-arrow {
  position: absolute;
  right: 17px;
  top: 11px;
  border-style: solid;
  border-width: 7px 0 7px 8px;
  border-color: transparent transparent transparent #555;
}

/* right column */
.right-col {
  width: 356px;
  flex: none;
  margin-top: -1px;
}
.chips {
  display: block;
  box-sizing: border-box;
  outline: 2px solid #eaeaea;
  outline-offset: -2px;
}
.raxis {
  font-size: 24px;
  fill: #999;
}
.chip-panel {
  height: 430px;
  box-sizing: border-box;
  border: 2px solid #eaeaea;
  border-top: none;
  padding: 12px 8px 0 8px;
}
.chip-tabs {
  display: flex;
  gap: 10px;
}
.ctab {
  position: relative;
  width: 162px;
  height: 63px;
  border-radius: 6px;
  background: #f5f5f5;
  color: #777;
  font-size: 30px;
  line-height: 63px;
  text-align: center;
}
.ctab.active {
  background: #ffe9ea;
  color: #f0384a;
}
.lock {
  position: absolute;
  right: 0;
  top: 0;
  width: 36px;
  height: 27px;
  background: #dd8a10;
  border-radius: 0 5px 0 4px;
  display: flex;
  align-items: center;
  justify-content: center;
}
.stat {
  display: flex;
  justify-content: space-between;
  align-items: center;
  height: 57px;
  font-size: 28px;
  padding: 0 1px;
}
.stat b {
  font-weight: 500;
  font-size: 27px;
}
.stat.red {
  margin-top: 13px;
  color: #e8354a;
}
.stat.orange {
  color: #f29a1f;
}
.seg {
  margin-top: 12px;
  height: 62px;
  padding: 4px;
  box-sizing: border-box;
  border-radius: 8px;
  background: #f4f4f4;
  display: flex;
  font-size: 29px;
  line-height: 57px;
  text-align: center;
}
.seg-on {
  width: 164px;
  height: 54px;
  background: #fff;
  border-radius: 5px;
  color: #333;
}
.seg-off {
  flex: 1;
  color: #aaa;
}
.range {
  display: flex;
  justify-content: space-between;
  align-items: center;
  margin-top: 15px;
  height: 56px;
  padding: 0 1px;
  font-size: 28px;
  color: #999;
}
.range b {
  font-weight: 500;
  color: #333;
  font-size: 27px;
}
.chip-foot {
  display: flex;
  justify-content: space-between;
  margin-top: 17px;
}
.pick {
  display: flex;
  align-items: center;
  justify-content: center;
  gap: 8px;
  width: 170px;
  height: 58px;
  margin-left: 2px;
  border-radius: 8px;
  background: #e6edfd;
  color: #3e6ee8;
  font-size: 28px;
}
.close {
  width: 84px;
  height: 58px;
  margin-right: 2px;
  border-radius: 8px;
  background: #f5f5f5;
  color: #666;
  font-size: 30px;
  line-height: 58px;
  text-align: center;
}

.sep {
  height: 12px;
  flex: none;
  background: #f5f5f5;
}

/* dock */
.dock {
  margin-top: 10px;
  height: 266px;
  flex: none;
  background: #262626;
  color: #c4c4c4;
  border-top: 1px solid #777;
  box-sizing: border-box;
}
.dock-items {
  display: flex;
  height: 180px;
}
.sector {
  width: 250px;
  text-align: center;
}
.sec-up {
  display: block;
  width: 0;
  margin: 10px auto 0 auto;
  border-style: solid;
  border-width: 0 13px 15px 13px;
  border-color: transparent transparent #aaa transparent;
}
.sec-name {
  margin-top: 18px;
  font-size: 36px;
  line-height: 46px;
  color: #bbb;
}
.sec-pct {
  margin-top: 14px;
  font-size: 40px;
  line-height: 44px;
  letter-spacing: -0.8px;
  color: #1fe01f;
}
.dock-item {
  width: 207px;
  flex: none;
  display: flex;
  flex-direction: column;
  align-items: center;
  padding-top: 22px;
  box-sizing: border-box;
  font-size: 35px;
}
.dock-item span {
  margin-top: 11px;
  line-height: 44px;
}
.dk {
  fill: none;
  stroke: #c8c8c8;
  stroke-width: 2.200;
}
.sysnav {
  display: flex;
  align-items: center;
  height: 50px;
  margin-top: 6px;
  padding-left: 114px;
}
.sn2 {
  margin-left: 134px;
}
.sn3 {
  margin-left: 182px;
}
.sn4 {
  margin-left: 182px;
}
</style>

<style>
html,
body {
  margin: 0;
  background: #fff;
}
</style>
